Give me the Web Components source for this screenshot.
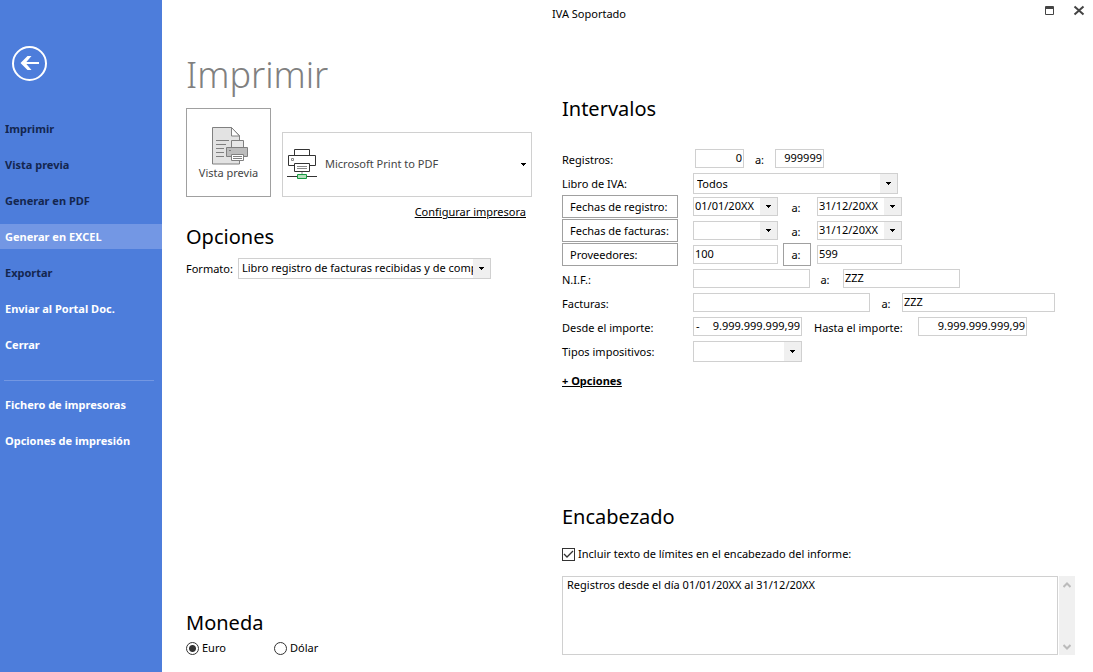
<!DOCTYPE html>
<html lang="es">
<head>
<meta charset="utf-8">
<title>IVA Soportado</title>
<style>
  body { margin: 0; background: #fff; color: #000; font: 11px/16px "Noto Sans", "Open Sans", sans-serif; }
</style>
</head>
<body>
<print-window>
  <side-menu slot="side">
    <menu-item tone="dark">Imprimir</menu-item>
    <menu-item tone="dark">Vista previa</menu-item>
    <menu-item tone="dark">Generar en PDF</menu-item>
    <menu-item active>Generar en EXCEL</menu-item>
    <menu-item tone="dark">Exportar</menu-item>
    <menu-item>Enviar al Portal Doc.</menu-item>
    <menu-item>Cerrar</menu-item>
    <menu-item slot="extra">Fichero de impresoras</menu-item>
    <menu-item slot="extra">Opciones de impresión</menu-item>
  </side-menu>
  <window-bar slot="bar">IVA Soportado</window-bar>
  <printer-panel slot="left"></printer-panel>
  <currency-panel slot="left-foot"></currency-panel>
  <interval-form slot="right"></interval-form>
  <header-panel slot="right-foot"></header-panel>
</print-window>

<script>
const controls = `
  * { box-sizing: border-box; }
  :host { display: block; }
  button, input, select, textarea { font: inherit; color: inherit; margin: 0; border-radius: 0; outline: 0; }
  input[type=text], select, textarea { border: 1px solid #d0d0d0; background-color: #fff; }
  input[type=text] { height: 19px; min-width: 0; padding: 0 1px 2px; }
  select {
    appearance: none; height: 19px; padding: 0 20px 1px 1px;
    background-image:
      url("data:image/svg+xml,%3Csvg xmlns='http://www.w3.org/2000/svg' width='5' height='3'%3E%3Cpath d='M0 0h5v1h-1v1h-1v1h-1v-1h-1v-1h-1z'/%3E%3C/svg%3E"),
      linear-gradient(#f0f0f0, #f0f0f0);
    background-repeat: no-repeat;
    background-position: right 6px center, right top;
    background-size: 5px 3px, 17px 100%;
  }
  button { background: #fff; border: 1px solid #a0a0a0; padding: 0; }
  h2 { margin: 0; font-size: 20px; line-height: 28px; font-weight: 400; }
  a { color: inherit; }
`;

function component(tag, css, html) {
  const template = document.createElement('template');
  template.innerHTML = `<style>${controls}${css}</style>${html}`;
  customElements.define(tag, class extends HTMLElement {
    constructor() {
      super();
      this.attachShadow({ mode: 'open' }).append(template.content.cloneNode(true));
    }
  });
}

component('print-window', `
  :host { display: grid; grid-template-columns: 162px minmax(0, 1fr); min-height: 100vh; }
  main { display: grid; grid-template-columns: 346px minmax(0, 1fr); grid-template-rows: auto 1fr auto;
         column-gap: 30px; padding: 0 18px 17px 24px; }
  .bar { grid-column: 2; }
  .foot { align-self: end; }
  .left { padding-top: 20px; }
  .right { padding-top: 67px; }
`, `
  <slot name="side"></slot>
  <main>
    <div class="bar"><slot name="bar"></slot></div>
    <div class="left"><slot name="left"></slot></div>
    <div class="right"><slot name="right"></slot></div>
    <div class="foot"><slot name="left-foot"></slot></div>
    <div class="foot"><slot name="right-foot"></slot></div>
  </main>
`);

component('window-bar', `
  header { display: flex; align-items: center; height: 28px; margin: 0 -10px; }
  h1 { font: inherit; margin: 0; flex: 1; }
  div { display: flex; gap: 17px; }
  button { border: 0; width: 12px; height: 12px; display: block; margin-bottom: 6px; }
  svg { display: block; }
`, `
  <header>
    <h1><slot></slot></h1>
    <div>
      <button aria-label="Maximizar"><svg width="12" height="12"><path d="M1.500 1.500h8v8h-8zM1 2.500h9M1 3.500h9" fill="none" stroke="#444"/></svg></button>
      <button aria-label="Cerrar ventana"><svg width="12" height="12"><path d="M1.500 1.500l9 8M10.500 1.500l-9 8" fill="none" stroke="#444" stroke-width="2"/></svg></button>
    </div>
  </header>
`);

component('side-menu', `
  :host { background: #4d7ddb; color: #fff; padding-top: 45px; }
  .back { display: block; margin: 0 0 34px 11px; border: 0; background: none; width: 37px; height: 37px; }
  svg { display: block; }
  nav { display: flex; flex-direction: column; gap: 11px; }
  hr { width: 150px; margin: 12px 0 0 4px; border: 0; border-top: 1px solid #7397e2; }
`, `
  <button class="back" aria-label="Volver">
    <svg width="37" height="37" fill="none" stroke="#fff">
      <circle cx="18.500" cy="18.500" r="16.500" stroke-width="2"/>
      <path d="M11 18h17" stroke-width="2"/><path d="M9.500 18l7-7h4l-6 7 6 7h-4z" fill="#fff" stroke="none"/>
    </svg>
  </button>
  <nav>
    <slot></slot>
    <hr>
    <slot name="extra"></slot>
  </nav>
`);

component('menu-item', `
  button { display: block; width: 100%; height: 25px; border: 0; background: none; text-align: left; padding: 0 5px; font-weight: 700; }
  :host([tone=dark]) { color: #14264f; }
  :host([active]) { background: #7397e4; }
`, `<button><slot></slot></button>`);

component('printer-panel', `
  h1 { margin: 0; font-size: 36px; line-height: 54px; font-weight: 350; color: #808080; }
  .pick { display: flex; align-items: flex-end; gap: 11px; margin-top: 6px; }
  .preview { width: 85px; height: 89px; display: flex; flex-direction: column; align-items: center; justify-content: center; padding-top: 2px; color: #444; }
  svg { display: block; flex: none; }
  .preview svg { margin-left: 2px; }
  .printer { flex: 1; height: 65px; border: 1px solid #d0d0d0; display: flex; align-items: center; padding-left: 4px; color: #444; }
  .printer svg { margin-bottom: 2px; }
  .printer select { flex: 1; min-width: 0; height: 63px; border: 0; padding: 0 20px 2px 8px;
    background-size: 5px 3px, 0 0; background-position: right 5px center, right top; }
  .setup { margin: 7px 6px 0 0; text-align: right; }
  h2 { margin-top: 3px; }
  .format { display: grid; grid-template-columns: 52px 253px; align-items: center; margin-top: 7px; }
  .format select { height: 21px; padding-left: 3px; padding-right: 17px; text-overflow: clip; }
`, `
  <h1>Imprimir</h1>
  <div class="pick">
    <button class="preview">
      <svg width="38" height="39" fill="none" stroke="#808080">
        <path d="M1.500 1.500h19l8 8v28.500h-27z" fill="#e3e3e3"/><path d="M20.500 1.500v8.500h8z" fill="#fff"/>
        <path d="M5 14.500h13M5 18.500h10M5 22.500h8M5 26.500h8M5 30.500h8"/>
        <path d="M20.500 14.500h12v7h-12z" fill="#e8e8e8"/><path d="M15.500 21.500h21v9h-21z" fill="#bdbdbd"/>
        <path d="M18 24.500h2"/><path d="M20.500 28.500h12v6h-12z" fill="#fff"/><path d="M22 30.500h9M22 32.500h9"/>
      </svg>
      <span>Vista previa</span>
    </button>
    <div class="printer">
      <svg width="30" height="32" fill="none" stroke="#333">
        <path d="M7.500 7V1.500h15V7M7 17.500H1.500v-10h27v10H23" />
        <path d="M7.500 15.500h15v8h-15z" fill="#fff"/>
        <path d="M4.500 10.500h2v2h-2zM10 18.500h10M10 20.500h10M15 24v2" stroke="#888"/>
        <path d="M0 28.500h30"/><path d="M10.500 26.500h9v4h-9z" fill="#b5dfbd" stroke="#169a41"/>
      </svg>
      <select aria-label="Impresora"><option>Microsoft Print to PDF</option></select>
    </div>
  </div>
  <div class="setup"><a href="#">Configurar impresora</a></div>
  <h2>Opciones</h2>
  <div class="format">
    <label for="format">Formato:</label>
    <select id="format"><option>Libro registro de facturas recibidas y de compras</option></select>
  </div>
`);

const choice = `
  input[type=radio], input[type=checkbox] { appearance: none; flex: none; width: 13px; height: 13px; border: 1px solid #333; background: #fff; }
  input[type=radio] { border-radius: 50%; }
  input[type=radio]:checked { background: radial-gradient(circle, #333 0 3px, #fff 4px); }
  label { display: flex; align-items: center; gap: 3px; }
`;

component('currency-panel', choice + `
  :host { margin-bottom: -1px; }
  fieldset { border: 0; margin: 0; padding: 0; }
  legend { padding: 0; }
  .options { display: grid; grid-template-columns: 88px 88px; margin-top: 3px; }
`, `
  <fieldset>
    <legend><h2>Moneda</h2></legend>
    <div class="options">
      <label><input type="radio" name="currency" checked>Euro</label>
      <label><input type="radio" name="currency">Dólar</label>
    </div>
  </fieldset>
`);

component('interval-form', `
  form { margin-top: 24px; }
  .row { display: grid; grid-template-columns: 131px minmax(0, 1fr); height: 24px; }
  label { line-height: 26px; }
  .row > button, .to { height: 23px; line-height: 21px; }
  .row > button { width: 116px; text-align: left; padding-left: 7px; }
  .fields { display: flex; align-items: flex-start; }
  .fields > :is(input, select, .amount) { margin-top: 2px; line-height: 16px; }
  .xs { width: 49px; }
  .sm { width: 85px; }
  .md { width: 109px; }
  .lg { width: 117px; }
  .xl { width: 177px; }
  .last { width: 153px; }
  .wide { width: 205px; }
  .tall { height: 21px; padding: 0 20px 0 3px; }
  .inset { padding-left: 2px; }
  .num, .amount input { text-align: right; }
  .a { width: 39px; text-align: center; padding-right: 3px; }
  .a.thin { width: 31px; padding-right: 0; }
  .a.mid { width: 33px; }
  .a.near { width: 32px; padding: 0; }
  .to { width: 28px; margin: 0 6px 0 5px; padding-right: 2px; text-align: center; }
  .until { width: 116px; padding-left: 12px; }
  .amount { display: flex; height: 19px; border: 1px solid #d0d0d0; padding: 0 0 0 2px; }
  .amount input { flex: 1; border: 0; height: 17px; }
  .more { display: inline-block; margin-top: 10px; font-weight: 700; }
`, `
  <h2>Intervalos</h2>
  <form>
    <div class="row"><label for="reg1">Registros:</label>
      <div class="fields inset"><input type="text" id="reg1" class="xs num" value="0"><label class="a thin" for="reg2">a:</label><input type="text" id="reg2" class="xs num" value="999999"></div></div>
    <div class="row"><label for="book">Libro de IVA:</label>
      <div class="fields"><select id="book" class="wide tall"><option>Todos</option></select></div></div>
    <div class="row"><button type="button" id="fr">Fechas de registro:</button>
      <div class="fields"><select class="sm" aria-labelledby="fr"><option>01/01/20XX</option></select><label class="a" for="fr2">a:</label><select id="fr2" class="sm"><option>31/12/20XX</option></select></div></div>
    <div class="row"><button type="button" id="ff">Fechas de facturas:</button>
      <div class="fields"><select class="sm" aria-labelledby="ff"><option></option></select><label class="a" for="ff2">a:</label><select id="ff2" class="sm"><option>31/12/20XX</option></select></div></div>
    <div class="row"><button type="button" id="pr">Proveedores:</button>
      <div class="fields"><input type="text" class="sm" aria-labelledby="pr" value="100"><button type="button" class="to" id="pr2">a:</button><input type="text" class="sm" aria-labelledby="pr2" value="599"></div></div>
    <div class="row"><label for="nif1">N.I.F.:</label>
      <div class="fields"><input type="text" id="nif1" class="lg"><label class="a mid" for="nif2">a:</label><input type="text" id="nif2" class="lg" value="ZZZ"></div></div>
    <div class="row"><label for="fa1">Facturas:</label>
      <div class="fields"><input type="text" id="fa1" class="xl"><label class="a near" for="fa2">a:</label><input type="text" id="fa2" class="last" value="ZZZ"></div></div>
    <div class="row"><label for="im1">Desde el importe:</label>
      <div class="fields"><div class="amount md"><span>-</span><input type="text" id="im1" value="9.999.999.999,99"></div><label class="until" for="im2">Hasta el importe:</label><input type="text" id="im2" class="md num" value="9.999.999.999,99"></div></div>
    <div class="row"><label for="tax">Tipos impositivos:</label>
      <div class="fields"><select id="tax" class="md tall"><option></option></select></div></div>
    <a class="more" href="#">+ Opciones</a>
  </form>
`);

component('header-panel', choice + `
  label { margin: 15px 0 14px; }
  input[type=checkbox]:checked { background: url("data:image/svg+xml,%3Csvg xmlns='http://www.w3.org/2000/svg' width='11' height='11' fill='none' stroke='%23333' stroke-width='1.3'%3E%3Cpath d='M1 5l3 3 6-6'/%3E%3C/svg%3E"); }
  .box { display: flex; gap: 1px; height: 79px; }
  textarea { flex: 1; min-width: 0; resize: none; padding: 0 4px; overflow: hidden; line-height: 16px; }
  .scroll { width: 16px; background: #f0f0f0; display: flex; flex-direction: column; justify-content: space-between; }
  .scroll button { border: 0; background: none; height: 17px; }
  svg { display: block; margin: 0 auto; }
`, `
  <h2>Encabezado</h2>
  <label><input type="checkbox" checked>Incluir texto de límites en el encabezado del informe:</label>
  <div class="box">
    <textarea aria-label="Texto del encabezado">Registros desde el día 01/01/20XX al 31/12/20XX</textarea>
    <div class="scroll">
      <button aria-label="Subir"><svg width="8" height="6"><path d="M.5 5L4 1.500 7.500 5" fill="none" stroke="#bbb" stroke-width="2"/></svg></button>
      <button aria-label="Bajar"><svg width="8" height="6"><path d="M.5 1L4 4.500 7.500 1" fill="none" stroke="#bbb" stroke-width="2"/></svg></button>
    </div>
  </div>
`);
</script>
</body>
</html>
